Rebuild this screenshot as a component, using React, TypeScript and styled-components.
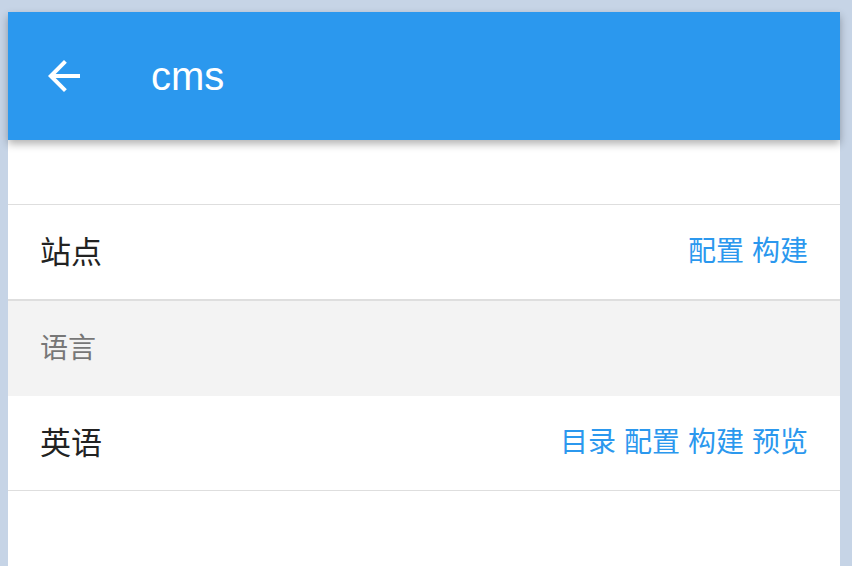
import { createGlobalStyle, styled } from 'styled-components'

const GlobalStyle = createGlobalStyle`
  html, body {
    margin: 0;
    padding: 0;
    background: #c6d4e6;
  }
  body {
    font-family: 'Noto Sans CJK SC', 'Liberation Sans', sans-serif;
  }
`

function BackIcon() {
  return (
    <svg width="48" height="48" viewBox="0 0 24 24" fill="#fff">
      <path d="M20 11H7.83l5.59-5.59L12 4l-8 8 8 8 1.41-1.41L7.83 13H20v-2z" />
    </svg>
  )
}

type Item = { name: string; actions: string[] }

const site: Item = { name: '站点', actions: ['配置', '构建'] }
const languages: Item[] = [{ name: '英语', actions: ['目录', '配置', '构建', '预览'] }]

function Row({ item }: { item: Item }) {
  return (
    <ListRow>
      <RowName>{item.name}</RowName>
      <Actions>
        {item.actions.map((a) => (
          <ActionLink key={a} href="#">
            {a}
          </ActionLink>
        ))}
      </Actions>
    </ListRow>
  )
}

function App() {
  return (
    <Page>
      <GlobalStyle />
      <Panel>
        <Header>
          <BackButton>
            <BackIcon />
          </BackButton>
          <Title>cms</Title>
        </Header>
        <Spacer />
        <Row item={site} />
        <SectionHead>语言</SectionHead>
        {languages.map((l) => (
          <Row key={l.name} item={l} />
        ))}
      </Panel>
    </Page>
  )
}
export default App

const Page = styled.div`
  height: 566px;
  padding: 12px 12px 0 8px;
  box-sizing: border-box;
  overflow: hidden;
`

const Panel = styled.div`
  background: #fff;
  height: 100%;
  display: flex;
  flex-direction: column;
`

const Header = styled.header`
  position: relative;
  z-index: 1;
  height: 128px;
  flex-shrink: 0;
  background: #2b98ee;
  display: flex;
  align-items: center;
  padding-left: 32px;
  box-shadow: 0 4px 8px rgba(0, 0, 0, 0.3);
`

const BackButton = styled.div`
  width: 48px;
  height: 48px;
  display: flex;
`

const Title = styled.h1`
  margin: 0 0 0 63px;
  font-family: 'Liberation Sans', Arial, sans-serif;
  font-weight: 400;
  font-size: 40px;
  color: #fff;
`

const Spacer = styled.div`
  height: 64px;
  flex-shrink: 0;
  border-bottom: 1px solid #dedede;
`

const ListRow = styled.div`
  height: 95px;
  flex-shrink: 0;
  box-sizing: border-box;
  display: flex;
  align-items: center;
  justify-content: space-between;
  padding: 0 32px 6px;
  border-bottom: 1px solid #dedede;
`

const RowName = styled.span`
  font-size: 31px;
  color: #222;
`

const Actions = styled.div`
  display: flex;
  gap: 8px;
`

const ActionLink = styled.a`
  font-size: 28px;
  color: #2b98ee;
  text-decoration: none;
`

const SectionHead = styled.div`
  height: 96px;
  flex-shrink: 0;
  box-sizing: border-box;
  display: flex;
  align-items: center;
  padding: 0 32px 6px;
  background: #f3f3f3;
  border-top: 1px solid #dedede;
  font-size: 28px;
  color: #777;
`
